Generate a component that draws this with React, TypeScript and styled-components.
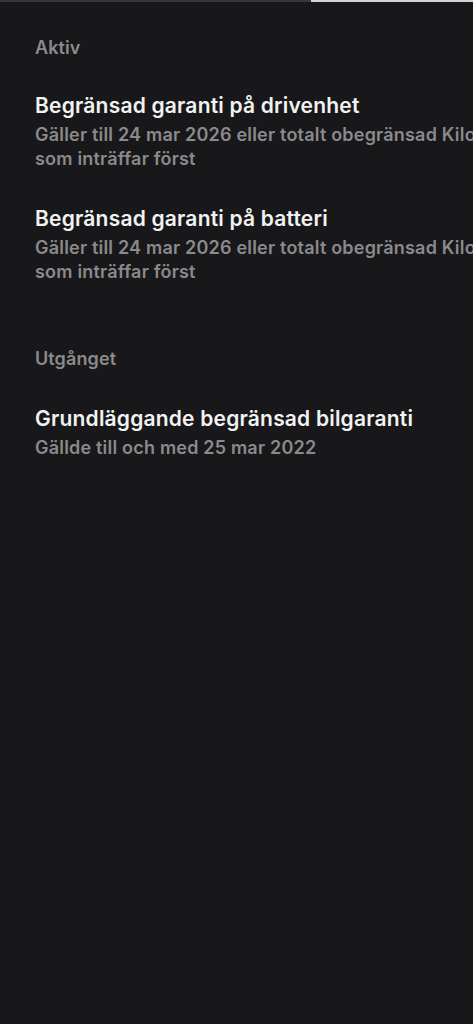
import React from "react";
import styled, { createGlobalStyle } from "styled-components";

const Global = createGlobalStyle`
  html, body { margin: 0; padding: 0; background: #18181a; }
  body { font-family: Inter, "Noto Sans", "Liberation Sans", sans-serif; overflow: hidden; }
  #root { min-height: 1024px; background: #18181a; }
`;

const Page = styled.div`
  width: 473px;
  min-height: 1024px;
  background: #18181a;
  overflow: hidden;
  display: flex;
  flex-direction: column;
`;

const Progress = styled.div`
  display: flex;
  height: 2px;
`;

const ProgressPart = styled.div<{ $w: number; $c: string }>`
  width: ${(p) => p.$w}px;
  flex: 0 0 auto;
  background: ${(p) => p.$c};
`;

const Content = styled.div`
  padding: 34px 0 0 35px;
  display: flex;
  flex-direction: column;
`;

const SectionTitle = styled.div<{ $mt: number }>`
  margin-top: ${(p) => p.$mt}px;
  color: #8b8b8e;
  font-size: 18px;
  font-weight: 600;
  line-height: 24px;
  letter-spacing: 0.1px;
`;

const Item = styled.div<{ $mt: number }>`
  margin-top: ${(p) => p.$mt}px;
  display: flex;
  flex-direction: column;
  width: 600px;
`;

const ItemTitle = styled.div`
  color: #f2f2f2;
  font-size: 21px;
  font-weight: 600;
  line-height: 28px;
  letter-spacing: 0.2px;
`;

const ItemSub = styled.div`
  margin-top: 3px;
  color: #8a8a8c;
  font-size: 18px;
  font-weight: 600;
  line-height: 24px;
  white-space: nowrap;
  letter-spacing: 0.2px;
`;

export default function App() {
  return (
    <Page>
      <Global />
      <Progress>
        <ProgressPart $w={311} $c="#38383b" />
        <ProgressPart $w={162} $c="#d4d4d6" />
      </Progress>
      <Content>
        <SectionTitle $mt={0}>Aktiv</SectionTitle>
        <Item $mt={32}>
          <ItemTitle>Begränsad garanti på drivenhet</ItemTitle>
          <ItemSub>
            Gäller till 24 mar 2026 eller totalt obegränsad Kilometer, beroende på vad
            <br />
            som inträffar först
          </ItemSub>
        </Item>
        <Item $mt={34}>
          <ItemTitle>Begränsad garanti på batteri</ItemTitle>
          <ItemSub>
            Gäller till 24 mar 2026 eller totalt obegränsad Kilometer, beroende på vad
            <br />
            som inträffar först
          </ItemSub>
        </Item>
        <SectionTitle $mt={63}>Utgånget</SectionTitle>
        <Item $mt={34}>
          <ItemTitle>Grundläggande begränsad bilgaranti</ItemTitle>
          <ItemSub>Gällde till och med 25 mar 2022</ItemSub>
        </Item>
      </Content>
    </Page>
  );
}
